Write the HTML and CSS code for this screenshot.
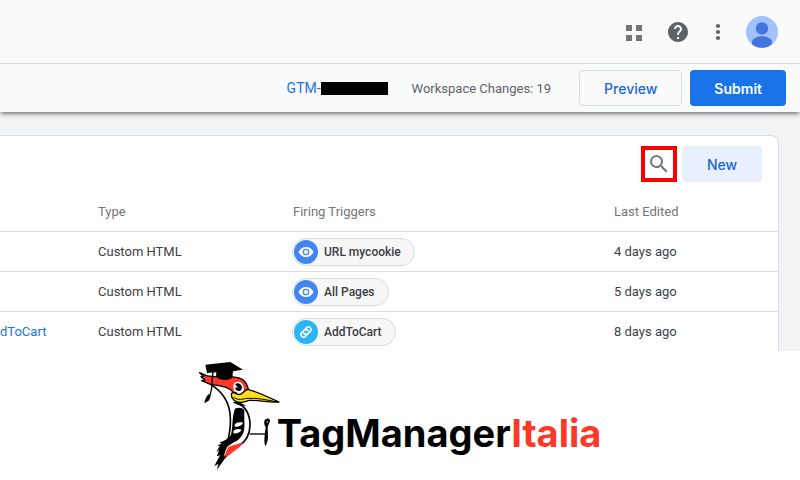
FILE: index.html
```html
<!DOCTYPE html>
<html lang="en">
<head>
  <meta charset="UTF-8">
  <meta name="viewport" content="width=device-width, initial-scale=1">
  <title>Tag Manager Italia</title>
  <link rel="stylesheet" href="styles.css">
</head>
<body>

<header class="topbar">
  <button class="icon-btn apps" type="button" aria-label="Apps">
    <svg width="24" height="24" viewBox="0 0 24 24" fill="#757575"><path d="M4 5h6v6H4zM14 5h6v6h-6zM4 15h6v6H4zM14 15h6v6h-6z"/></svg>
  </button>
  <button class="icon-btn" type="button" aria-label="Help">
    <svg width="24" height="24" viewBox="0 0 24 24" fill="#5f6368"><path d="M12 2C6.48 2 2 6.48 2 12s4.48 10 10 10 10-4.48 10-10S17.52 2 12 2zm1 17h-2v-2h2v2zm2.07-7.75l-.9.92C13.45 12.9 13 13.5 13 15h-2v-.5c0-1.1.45-2.1 1.17-2.83l1.24-1.26c.37-.36.59-.86.59-1.41 0-1.1-.9-2-2-2s-2 .9-2 2H8c0-2.21 1.79-4 4-4s4 1.79 4 4c0 .88-.36 1.68-.93 2.25z"/></svg>
  </button>
  <button class="icon-btn" type="button" aria-label="More">
    <svg width="24" height="24" viewBox="0 0 24 24" fill="#5f6368"><circle cx="12" cy="6" r="2.1"/><circle cx="12" cy="12" r="2.1"/><circle cx="12" cy="18" r="2.1"/></svg>
  </button>
  <button class="icon-btn" type="button" aria-label="Account">
    <svg width="32" height="32" viewBox="0 0 32 32"><circle cx="16" cy="16" r="16" fill="#a0c3ff"/><circle cx="16" cy="12.4" r="6.2" fill="#4374e0"/><path d="M6 28.3v-2.5c0-3 5-5.5 10-5.5s10 2.5 10 5.5v2.5A16 16 0 0 1 6 28.3z" fill="#4374e0"/></svg>
  </button>
</header>

<div class="workspace-bar">
  <a href="#" class="container-id">GTM-<span class="redacted"></span></a>
  <span class="changes">Workspace Changes: 19</span>
  <div class="actions">
    <button class="btn btn-outline" type="button">Preview</button>
    <button class="btn btn-primary" type="button">Submit</button>
  </div>
</div>

<main class="content">
  <section class="card">
    <div class="card-tools">
      <button class="search-btn" type="button" aria-label="Search">
        <svg width="24" height="24" viewBox="0 0 24 24" fill="#757575"><path d="M15.5 14h-.79l-.28-.27A6.47 6.47 0 0 0 16 9.5 6.5 6.5 0 1 0 9.5 16c1.61 0 3.09-.59 4.23-1.57l.27.28v.79l5 4.99L20.49 19l-4.99-5zm-6 0C7.01 14 5 11.99 5 9.5S7.01 5 9.5 5 14 7.01 14 9.5 11.99 14 9.5 14z"/></svg>
      </button>
      <button class="btn btn-soft" type="button">New</button>
    </div>
    <table class="tags">
      <thead>
        <tr>
          <th class="col-name"></th>
          <th class="col-type">Type</th>
          <th>Firing Triggers</th>
          <th class="col-edited">Last Edited</th>
        </tr>
      </thead>
      <tbody>
        <tr>
          <td></td>
          <td>Custom HTML</td>
          <td>
            <span class="chip">
              <svg width="24" height="24" viewBox="0 0 24 24"><circle cx="12" cy="12" r="12" fill="#4285f4"/><path d="M4.5 12C6 8.8 8.8 6.9 12 6.9s6 1.9 7.5 5.1c-1.5 3.2-4.3 5.1-7.5 5.1S6 15.2 4.5 12z" fill="#fff"/><circle cx="12" cy="12" r="2.7" fill="#fff" stroke="#4285f4" stroke-width="1.3"/></svg>
              URL mycookie
            </span>
          </td>
          <td>4 days ago</td>
        </tr>
        <tr>
          <td></td>
          <td>Custom HTML</td>
          <td>
            <span class="chip">
              <svg width="24" height="24" viewBox="0 0 24 24"><circle cx="12" cy="12" r="12" fill="#4285f4"/><path d="M4.5 12C6 8.8 8.8 6.9 12 6.9s6 1.9 7.5 5.1c-1.5 3.2-4.3 5.1-7.5 5.1S6 15.2 4.5 12z" fill="#fff"/><circle cx="12" cy="12" r="2.7" fill="#fff" stroke="#4285f4" stroke-width="1.3"/></svg>
              All Pages
            </span>
          </td>
          <td>5 days ago</td>
        </tr>
        <tr>
          <td><a href="#">dToCart</a></td>
          <td>Custom HTML</td>
          <td>
            <span class="chip">
              <svg width="24" height="24" viewBox="0 0 24 24"><circle cx="12" cy="12" r="12" fill="#29b6f6"/><g transform="rotate(-45 12 12)" fill="none" stroke="#fff" stroke-width="1.6" stroke-linecap="round"><path d="M11 14.6H8.600a2.600 2.600 0 0 1 0-5.200h3.200a2.600 2.600 0 0 1 2.400 3.300"/><path d="M13 9.400h2.400a2.600 2.600 0 0 1 0 5.200h-3.200a2.600 2.600 0 0 1-2.400-3.300"/></g></svg>
              AddToCart
            </span>
          </td>
          <td>8 days ago</td>
        </tr>
      </tbody>
    </table>
  </section>
</main>

<footer class="brand">
  <svg class="bird" width="82" height="110" viewBox="30 30 246 330" aria-hidden="true">
    <!-- body -->
    <path d="M66 104c32 20 52 46 57 86 3 26 1 50-5 76" fill="none" stroke="#000" stroke-width="5"/>
    <path d="M144 160c26 6 39 36 39 64 0 30-12 50-34 64-16 10-30 20-50 44" fill="none" stroke="#000" stroke-width="5"/>
    <path d="M132 158l14-8 22 2-12 7 16 9-20-2z"/>
    <!-- wing -->
    <path d="M138 176c10-5 26-3 28 5-1 18 2 44-1 60-4 18-16 30-30 36-14 8-30 18-38 30l-13 11 6-18-8 6 10-18-7-2 13-5-7-5c16-2 28-12 35-22 6-22 2-50 12-78z"/>
    <path d="M137 224c4-7 14-9 25-6-2 8-14 13-25 12zM133 244c5-7 14-9 25-5-4 9-15 12-25 11z" fill="#fff"/>
    <!-- tail -->
    <path d="M118 290l46-14c-10 18-30 27-44 40l-16 6z" fill="#ff3828"/>
    <path d="M116 286l-12 32 4-3-5 17-19 27 4-17-12 6 17-32-10 3 19-29z"/>
    <!-- head -->
    <path d="M32 68l20 9c28 7 68-1 98 7 15 4 24 16 28 33l-18 11h-26c-12-16-36-22-68-24l-28-12 10-2-12-10h8z" fill="#ff3828" stroke="#000" stroke-width="4" stroke-linejoin="round"/>
    <path d="M133 105c4-10 17-13 25-5 8 9 9 22 2 31-8 2-21-4-26-10z" fill="#fff"/>
    <path d="M138 103c7-7 17-3 20 5 3 9-3 16-10 15-7 0-10-6-9-11l8 2-5-7z"/>
    <path d="M128 130c5-7 10 2 23 4 12-1 15-16 27-15 26 6 58 21 92 37-34 2-62-6-88-5-12 2-22 10-38 5-13-5-19-17-16-26z" fill="#ffe01b" stroke="#000" stroke-width="4" stroke-linejoin="round"/>
    <path d="M134 142c12 10 28 5 40 3 28-2 57 4 90 11" fill="none" stroke="#000" stroke-width="3"/>
    <!-- graduation cap -->
    <path d="M49 44l75-8 38 23-30 5-2 20c-14 9-38 7-49-4l1-13-28 2z"/>
    <path d="M72 66c-5 26 1 50-11 74" fill="none" stroke="#000" stroke-width="4"/>
    <path d="M61 132c6 5 3 13-2 20l-13 8c2-12 6-24 15-28z"/>
    <!-- leg and foot -->
    <path d="M182 252h48" fill="none" stroke="#000" stroke-width="4"/>
    <path d="M226 213c2-8 15-11 17-2 0 8-6 12-7 22l1 30c-1 10-4 18-8 26-4-12-3-22-2-32 0-10 3-18 3-26-4-5-5-11-4-18z"/>
    <circle cx="235" cy="216" r="2" fill="#fff"/>
  </svg>
  <span class="wordmark">TagManager<span class="italia">Italia</span></span>
</footer>

</body>
</html>
```

FILE: styles.css
```css
* {
  box-sizing: border-box;
}
body {
  margin: 0;
  font-family: Roboto, "Liberation Sans", sans-serif;
  font-size: 13px;
  color: #3c4043;
  background: #fff;
}
a {
  color: #1a73e8;
  text-decoration: none;
}
button {
  font-family: inherit;
  cursor: pointer;
}
svg {
  display: block;
}

/* Top bar */
.topbar {
  display: flex;
  justify-content: flex-end;
  align-items: center;
  gap: 16px;
  height: 64px;
  padding-right: 22px;
  background: #fafafa;
  border-bottom: 1px solid #dadce0;
}
.icon-btn {
  padding: 0;
  border: none;
  background: none;
}
.apps {
  margin-right: 4px;
}

/* Workspace bar */
.workspace-bar {
  position: relative;
  display: flex;
  justify-content: flex-end;
  align-items: center;
  height: 48px;
  padding-right: 14px;
  background: #f9fafa;
  box-shadow: 0 3px 4px -1px rgba(0, 0, 0, 0.5);
}
.container-id {
  display: flex;
  align-items: center;
  font-size: 14px;
}
.redacted {
  width: 67px;
  height: 13px;
  background: #000;
}
.changes {
  margin: 0 28px 0 24px;
  color: #5f6368;
}
.actions {
  display: flex;
  gap: 8px;
}
.btn {
  min-width: 80px;
  height: 36px;
  padding: 0 24px;
  border: none;
  border-radius: 4px;
  font-family: Inter, Roboto, sans-serif;
  font-size: 14px;
  font-weight: 500;
}
.btn-outline {
  background: #fafafa;
  border: 1px solid #dadce0;
  color: #1a66dc;
}
.btn-primary {
  background: #1a73e8;
  color: #fff;
  font-weight: 600;
}
.btn-soft {
  background: #e8f0fe;
  color: #1967d2;
}

/* Tag list */
.content {
  padding: 23px 21px 0 0;
  background: #f1f3f4;
}
.card {
  background: #fff;
  border: 1px solid #dadce0;
  border-width: 1px 1px 0 0;
  border-top-right-radius: 8px;
}
.card-tools {
  display: flex;
  justify-content: flex-end;
  gap: 5px;
  padding: 10px 16px;
}
.search-btn {
  display: flex;
  justify-content: center;
  align-items: center;
  width: 36px;
  height: 36px;
  padding: 0;
  border: 4px solid #f00;
  background: #fff;
}
.tags {
  width: 100%;
  border-collapse: separate;
  border-spacing: 0;
  table-layout: fixed;
}
.tags th,
.tags td {
  height: 40px;
  padding: 0;
  border-bottom: 1px solid #dadce0;
  text-align: left;
}
.tags th {
  font-weight: 400;
  color: #757575;
}
.tags tr:last-child td {
  height: 39px;
  border-bottom: none;
}
.tags thead tr:last-child th {
  border-bottom: 1px solid #dadce0;
}
.col-name {
  width: 98px;
}
.col-type {
  width: 194px;
}
.col-edited {
  width: 164px;
}
.tags th:nth-child(3) {
  padding-left: 1px;
}
.chip {
  display: inline-flex;
  align-items: center;
  gap: 6px;
  height: 28px;
  padding: 0 13px 0 1px;
  border: 1px solid #dadce0;
  border-radius: 14px;
  background: #f7f7f7;
  font-size: 12px;
  font-weight: 500;
  vertical-align: middle;
}

/* Brand */
.brand {
  display: flex;
  justify-content: center;
  padding: 9px 0;
}
.wordmark {
  margin: 49px 0 0 -4px;
  font-family: Inter, "Open Sans", sans-serif;
  font-size: 38px;
  font-weight: 700;
  line-height: 48px;
  color: #000;
}
.italia {
  color: #ff3828;
}
```
